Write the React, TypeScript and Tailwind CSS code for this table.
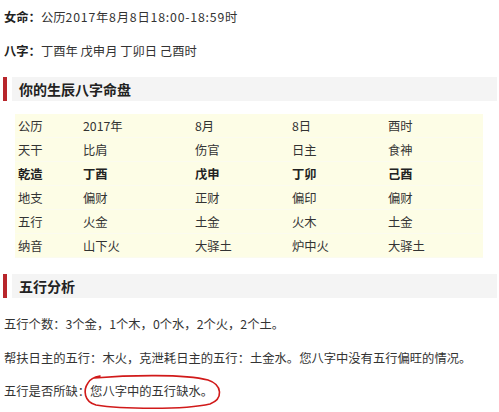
const rows: { label: string; cells: string[]; bold?: boolean }[] = [
  { label: '公历', cells: ['2017年', '8月', '8日', '酉时'] },
  { label: '天干', cells: ['比肩', '伤官', '日主', '食神'] },
  { label: '乾造', cells: ['丁酉', '戊申', '丁卯', '己酉'], bold: true },
  { label: '地支', cells: ['偏财', '正财', '偏印', '偏财'] },
  { label: '五行', cells: ['火金', '土金', '火木', '土金'] },
  { label: '纳音', cells: ['山下火', '大驿土', '炉中火', '大驿土'] },
]

const colWidths = ['w-[65px]', 'w-[112px]', 'w-[97px]', 'w-[96px]', 'w-[98px]']

function SectionTitle({ children }: { children: React.ReactNode }) {
  return (
    <div className="flex h-[24px] items-stretch">
      <div className="w-[4px] bg-[#b8262b]" />
      <div className="ml-[5px] flex flex-1 items-center bg-[#f4f4f4] pl-[7px] text-[14px] font-bold text-[#222]">
        {children}
      </div>
    </div>
  )
}

export default function App() {
  return (
    <div
      className="relative h-[412px] w-[499px] overflow-hidden bg-white pl-[3px] pr-[2px] text-[12.3px] leading-[20px] text-[#333]"
      style={{ fontFamily: '"Noto Sans CJK SC", "Noto Sans", sans-serif' }}
    >
      <p className="mt-[7px] pl-[1px]">
        <b className="font-bold text-[#222]">女命：</b>公历<span className="tracking-[0.8px]">2017年8月8日18:00-18:59</span>时
      </p>
      <p className="mt-[14px] pl-[1px]">
        <b className="font-bold text-[#222]">八字：</b>丁酉年 戊申月 丁卯日 己酉时
      </p>

      <div className="mt-[16px]">
        <SectionTitle>你的生辰八字命盘</SectionTitle>
      </div>

      {/* 命盘表格 */}
      <div className="ml-[12px] mt-[13px] w-[468px] bg-[#fdfde6]">
        {rows.map(row => (
          <div key={row.label} className={`flex h-[24px] items-center border-b border-[#fbfbef] ${row.bold ? 'font-bold text-[#222]' : ''}`}>
            <div className={`${colWidths[0]} pl-[3px]`}>{row.label}</div>
            {row.cells.map((c, i) => (
              <div key={i} className={`${colWidths[i + 1]} pl-[3px]`}>{c}</div>
            ))}
          </div>
        ))}
      </div>

      <div className="mt-[16px]">
        <SectionTitle>五行分析</SectionTitle>
      </div>

      <p className="mt-[16px] pl-[1px]">五行个数：3个金，1个木，0个水，2个火，2个土。</p>
      <p className="mt-[14px] pl-[1px]">帮扶日主的五行：木火，克泄耗日主的五行：土金水。您八字中没有五行偏旺的情况。</p>
      <p className="mt-[13px] pl-[1px]">五行是否所缺：您八字中的五行缺水。</p>

      {/* hand drawn circle */}
      <svg className="absolute left-[80px] top-[372px]" width="145" height="40" viewBox="0 0 145 40" fill="none">
        <path
          d="M14 6 C 50 3, 105 2, 128 8 C 143 13, 143 27, 130 32 C 105 38, 40 37, 16 33 C 4 30, 3 18, 8 11 C 10 7, 14 5, 20 4"
          stroke="#d11a1a"
          strokeWidth="1.6"
          strokeLinecap="round"
        />
      </svg>
    </div>
  )
}
